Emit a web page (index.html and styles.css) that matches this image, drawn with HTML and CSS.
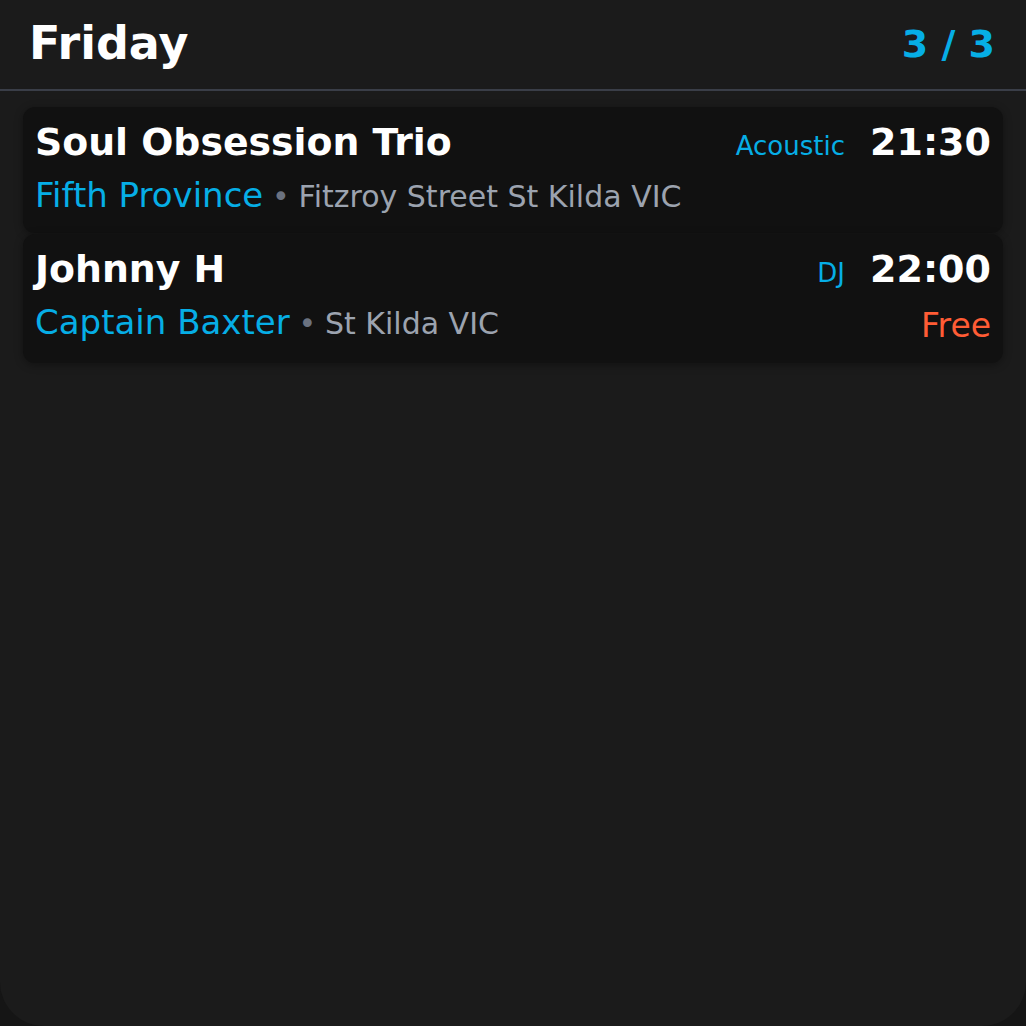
FILE: index.html
```html
<!DOCTYPE html>
<html lang="en">
<head>
<meta charset="utf-8">
<title>Friday</title>
<link rel="stylesheet" href="styles.css">
</head>
<body>
<div class="panel">
  <header class="header">
    <h1 class="day">Friday</h1>
    <div class="count">3 / 3</div>
  </header>
  <div class="list">
    <div class="card">
      <div class="row top">
        <div class="title">Soul Obsession Trio</div>
        <div class="tag">Acoustic</div>
        <div class="time">21:30</div>
      </div>
      <div class="row bottom">
        <div class="where"><span class="venue">Fifth Province</span> <span class="dot">•</span> <span class="addr">Fitzroy Street St Kilda VIC</span></div>
      </div>
    </div>
    <div class="card">
      <div class="row top">
        <div class="title">Johnny H</div>
        <div class="tag">DJ</div>
        <div class="time">22:00</div>
      </div>
      <div class="row bottom">
        <div class="where"><span class="venue">Captain Baxter</span> <span class="dot">•</span> <span class="addr">St Kilda VIC</span></div>
        <div class="price">Free</div>
      </div>
    </div>
  </div>
</div>
</body>
</html>
```

FILE: styles.css
```css
html, body {
  margin: 0;
  padding: 0;
  height: 100%;
  background: #151515;
}
body {
  font-family: "DejaVu Sans", sans-serif;
  color: #ffffff;
}
.panel {
  height: 1026px;
  box-sizing: border-box;
  background: #1b1b1b;
  border-radius: 0 0 44px 44px;
  overflow: hidden;
}
.header {
  display: flex;
  align-items: center;
  justify-content: space-between;
  padding: 0 31px 0 29px;
  height: 91px;
  box-sizing: border-box;
  border-bottom: 2px solid #3a3e48;
}
.day {
  margin: 0;
  font-size: 46px;
  font-weight: 700;
  line-height: 1;
  color: #ffffff;
  position: relative;
  top: -2px;
}
.count {
  font-size: 38px;
  font-weight: 700;
  color: #06aee6;
  line-height: 1;
  position: relative;
  top: -1px;
}
.list {
  padding: 16px 23px;
  display: flex;
  flex-direction: column;
  gap: 1px;
}
.card {
  background: #111111;
  border-radius: 12px;
  padding: 13px 12px 16px 12px;
  box-shadow: 0 2px 8px rgba(0, 0, 0, 0.35);
}
.row {
  display: flex;
  align-items: baseline;
}
.top {
  font-size: 38px;
  line-height: 44px;
}
.title {
  flex: 1;
  font-size: 37.8px;
  font-weight: 700;
  color: #ffffff;
}
.tag {
  font-size: 26px;
  line-height: 1;
  color: #06aee6;
  margin-right: 25px;
}
.time {
  font-size: 38px;
  font-weight: 700;
  color: #ffffff;
}
.bottom {
  margin-top: 9px;
  font-size: 34px;
  line-height: 44px;
}
.where {
  flex: 1;
  white-space: nowrap;
  font-size: 34px;
}
.venue {
  font-size: 34px;
  color: #06aee6;
}
.dot {
  font-size: 30px;
  line-height: 1;
  color: #6b7280;
  margin: 0 -2px;
}
.addr {
  font-size: 30px;
  line-height: 1;
  color: #9ca3af;
}
.price {
  align-self: flex-end;
  font-size: 33px;
  line-height: 1;
  margin: 9px 0 5px;
  color: #ff5c35;
}
```
